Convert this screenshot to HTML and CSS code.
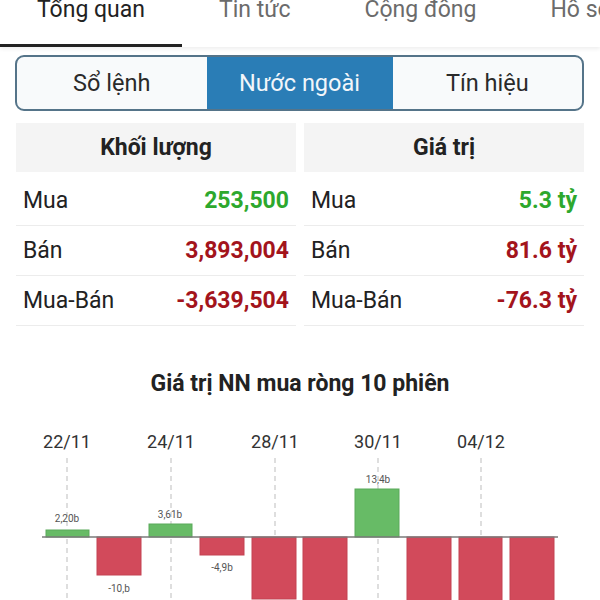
FILE: index.html
```html
<!DOCTYPE html>
<html lang="vi">
<head>
  <meta charset="UTF-8" />
  <title>Nước ngoài</title>
  <link rel="stylesheet" href="styles.css">
</head>
<body>

  <nav class="tabs">
    <div class="tab active">Tổng quan</div>
    <div class="tab">Tin tức</div>
    <div class="tab">Cộng đồng</div>
    <div class="tab">Hồ sơ</div>
  </nav>

  <div class="segments">
    <div class="seg">Sổ lệnh</div>
    <div class="seg on">Nước ngoài</div>
    <div class="seg">Tín hiệu</div>
  </div>

  <section class="stats">
    <div class="col">
      <div class="head">Khối lượng</div>
      <div class="row"><span>Mua</span><b class="up">253,500</b></div>
      <div class="row"><span>Bán</span><b class="down">3,893,004</b></div>
      <div class="row"><span>Mua-Bán</span><b class="down">-3,639,504</b></div>
    </div>
    <div class="col">
      <div class="head">Giá trị</div>
      <div class="row"><span>Mua</span><b class="up">5.3 tỷ</b></div>
      <div class="row"><span>Bán</span><b class="down">81.6 tỷ</b></div>
      <div class="row"><span>Mua-Bán</span><b class="down">-76.3 tỷ</b></div>
    </div>
  </section>

  <h2 class="chart-title">Giá trị NN mua ròng 10 phiên</h2>

  <svg class="chart" width="600" height="180" viewBox="0 0 600 180">
    <g class="dates">
      <text x="67" y="27">22/11</text>
      <text x="171" y="27">24/11</text>
      <text x="275" y="27">28/11</text>
      <text x="378" y="27">30/11</text>
      <text x="481" y="27">04/12</text>
    </g>
    <g class="grid">
      <line x1="67" y1="37" x2="67" y2="180" />
      <line x1="171" y1="37" x2="171" y2="180" />
      <line x1="275" y1="37" x2="275" y2="180" />
      <line x1="378" y1="37" x2="378" y2="180" />
      <line x1="481" y1="37" x2="481" y2="180" />
    </g>
    <g class="bars">
      <rect class="pos" x="46" y="109" width="43" height="7" />
      <rect class="neg" x="97" y="116" width="44" height="38" />
      <rect class="pos" x="149" y="103" width="43" height="13" />
      <rect class="neg" x="200" y="116" width="44" height="18" />
      <rect class="neg" x="252" y="116" width="44" height="62" />
      <rect class="neg" x="303" y="116" width="44" height="70" />
      <rect class="pos" x="355" y="68" width="44" height="48" />
      <rect class="neg" x="407" y="116" width="44" height="70" />
      <rect class="neg" x="459" y="116" width="43" height="70" />
      <rect class="neg" x="510" y="116" width="44" height="70" />
    </g>
    <line class="axis" x1="42" y1="116" x2="558" y2="116" />
    <g class="vals">
      <text x="67" y="101">2,20b</text>
      <text x="119" y="171">-10,b</text>
      <text x="170" y="97">3,61b</text>
      <text x="222" y="150">-4,9b</text>
      <text x="378" y="62">13,4b</text>
    </g>
  </svg>

</body>
</html>
```

FILE: styles.css
```css
body {
  margin: 0;
  width: 600px;
  height: 600px;
  overflow: hidden;
  font-family: Roboto, "Noto Sans", sans-serif;
  background: #fff;
  color: #222;
}

/* top tab bar */
.tabs {
  display: flex;
  height: 47px;
  box-shadow: 0 2px 4px rgba(0,0,0,0.07);
  white-space: nowrap;
  overflow: hidden;
}
.tab {
  padding: 0 37px;
  font-size: 23px;
  line-height: 20px;
  color: #6b6b6b;
}
.tab.active {
  color: #222;
  box-shadow: inset 0 -3px 0 #222;
}

/* segmented control */
.segments {
  display: flex;
  margin: 8px 16px 0 15px;
  height: 52px;
  border: 2px solid #557489;
  border-radius: 9px;
  background: #f8fafb;
  overflow: hidden;
}
.seg {
  flex: 1;
  display: flex;
  align-items: center;
  justify-content: center;
  font-size: 23.5px;
  color: #2a2a2a;
}
.seg.on {
  flex: 0 0 186px;
  background: #2a7db6;
  color: #f2f6fa;
}

/* stats tables */
.stats {
  display: flex;
  gap: 8px;
  margin: 12px 16px 0 16px;
}
.col {
  flex: 1;
}
.head {
  height: 49px;
  margin-bottom: 4px;
  background: #f4f4f4;
  display: flex;
  align-items: center;
  justify-content: center;
  font-size: 23px;
  font-weight: bold;
  color: #222;
}
.row {
  height: 49px;
  border-bottom: 1px solid #ececec;
  display: flex;
  align-items: center;
  justify-content: space-between;
  padding: 0 7px 0 7px;
  font-size: 23px;
}
.row span {
  color: #222;
}
.up {
  color: #2da82d;
}
.down {
  color: #a3141c;
}

/* chart */
.chart-title {
  margin: 45px 0 0;
  text-align: center;
  font-size: 23px;
  line-height: 26px;
  font-weight: bold;
  color: #222;
}
.chart {
  display: block;
  margin-top: 24px;
}
.dates text {
  font-family: Roboto, sans-serif;
  font-size: 18px;
  fill: #333;
  text-anchor: middle;
}
.grid line {
  stroke: #bdbdbd;
  stroke-width: 1;
  stroke-dasharray: 5 4;
}
.pos {
  fill: #67bb66;
  stroke: #5aa95a;
  stroke-width: 1;
}
.neg {
  fill: #d24a5b;
  stroke: #c44252;
  stroke-width: 1;
}
.axis {
  stroke: #7a7a7a;
  stroke-width: 1.5;
}
.vals text {
  font-family: Roboto, sans-serif;
  font-size: 10px;
  fill: #555;
  text-anchor: middle;
}
```
